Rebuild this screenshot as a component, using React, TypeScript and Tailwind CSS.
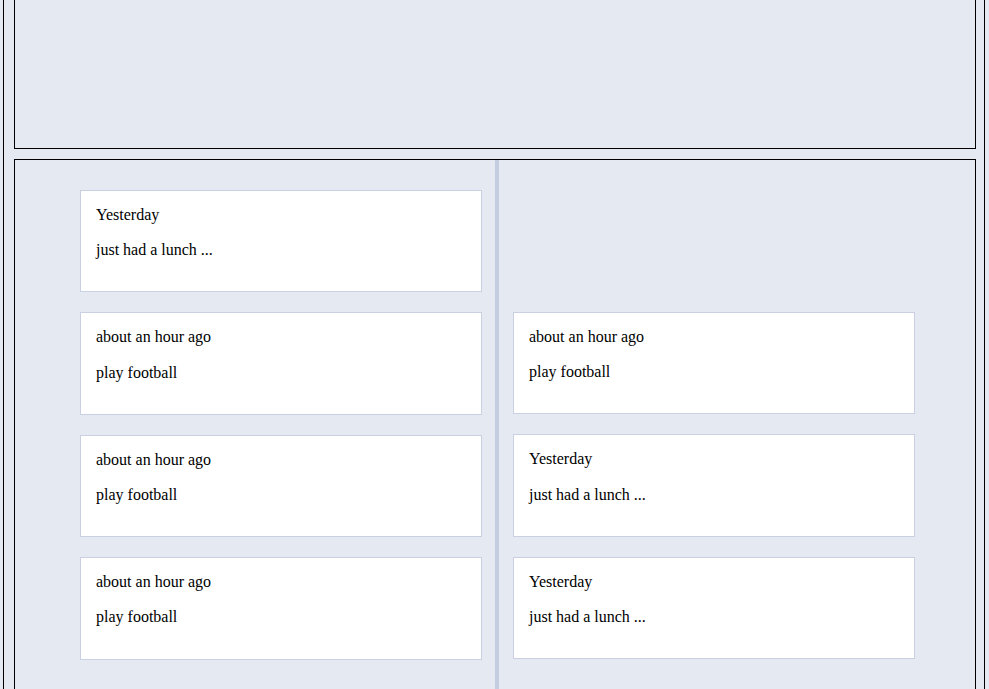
import React from "react";

type Item = { time: string; text: string };

const left: Item[] = [
  { time: "Yesterday", text: "just had a lunch ..." },
  { time: "about an hour ago", text: "play football" },
  { time: "about an hour ago", text: "play football" },
  { time: "about an hour ago", text: "play football" },
];

const right: Item[] = [
  { time: "about an hour ago", text: "play football" },
  { time: "Yesterday", text: "just had a lunch ..." },
  { time: "Yesterday", text: "just had a lunch ..." },
];

function Card({ item }: { item: Item }) {
  return (
    <div className="w-[402px] bg-white border border-[#c8d0e1] px-[15px] pt-[14px] pb-[16px] mb-[20px]">
      <p className="mb-[16px] leading-[1.2]">{item.time}</p>
      <p className="mb-[16px] leading-[1.2]">{item.text}</p>
    </div>
  );
}

export default function App() {
  return (
    <div
      className="min-h-screen bg-[#e5e9f1] text-black text-[16px]"
      style={{ fontFamily: '"Liberation Serif", "Times New Roman", serif' }}
    >
      <div className="ml-[3px] w-[982px] border-x border-black min-h-[760px]">
        <div className="ml-[10px] w-[962px] h-[149px] border-x border-b border-black" />
        <div className="ml-[10px] mt-[10px] w-[962px] border border-black flex min-h-[600px]">
          <div className="w-[480px] pt-[30px] pl-[65px]">
            {left.map((it, i) => (
              <Card key={i} item={it} />
            ))}
          </div>
          <div className="w-[4px] bg-[#c4cde0]" />
          <div className="w-[476px] pt-[152px] pl-[14px]">
            {right.map((it, i) => (
              <Card key={i} item={it} />
            ))}
          </div>
        </div>
      </div>
    </div>
  );
}
